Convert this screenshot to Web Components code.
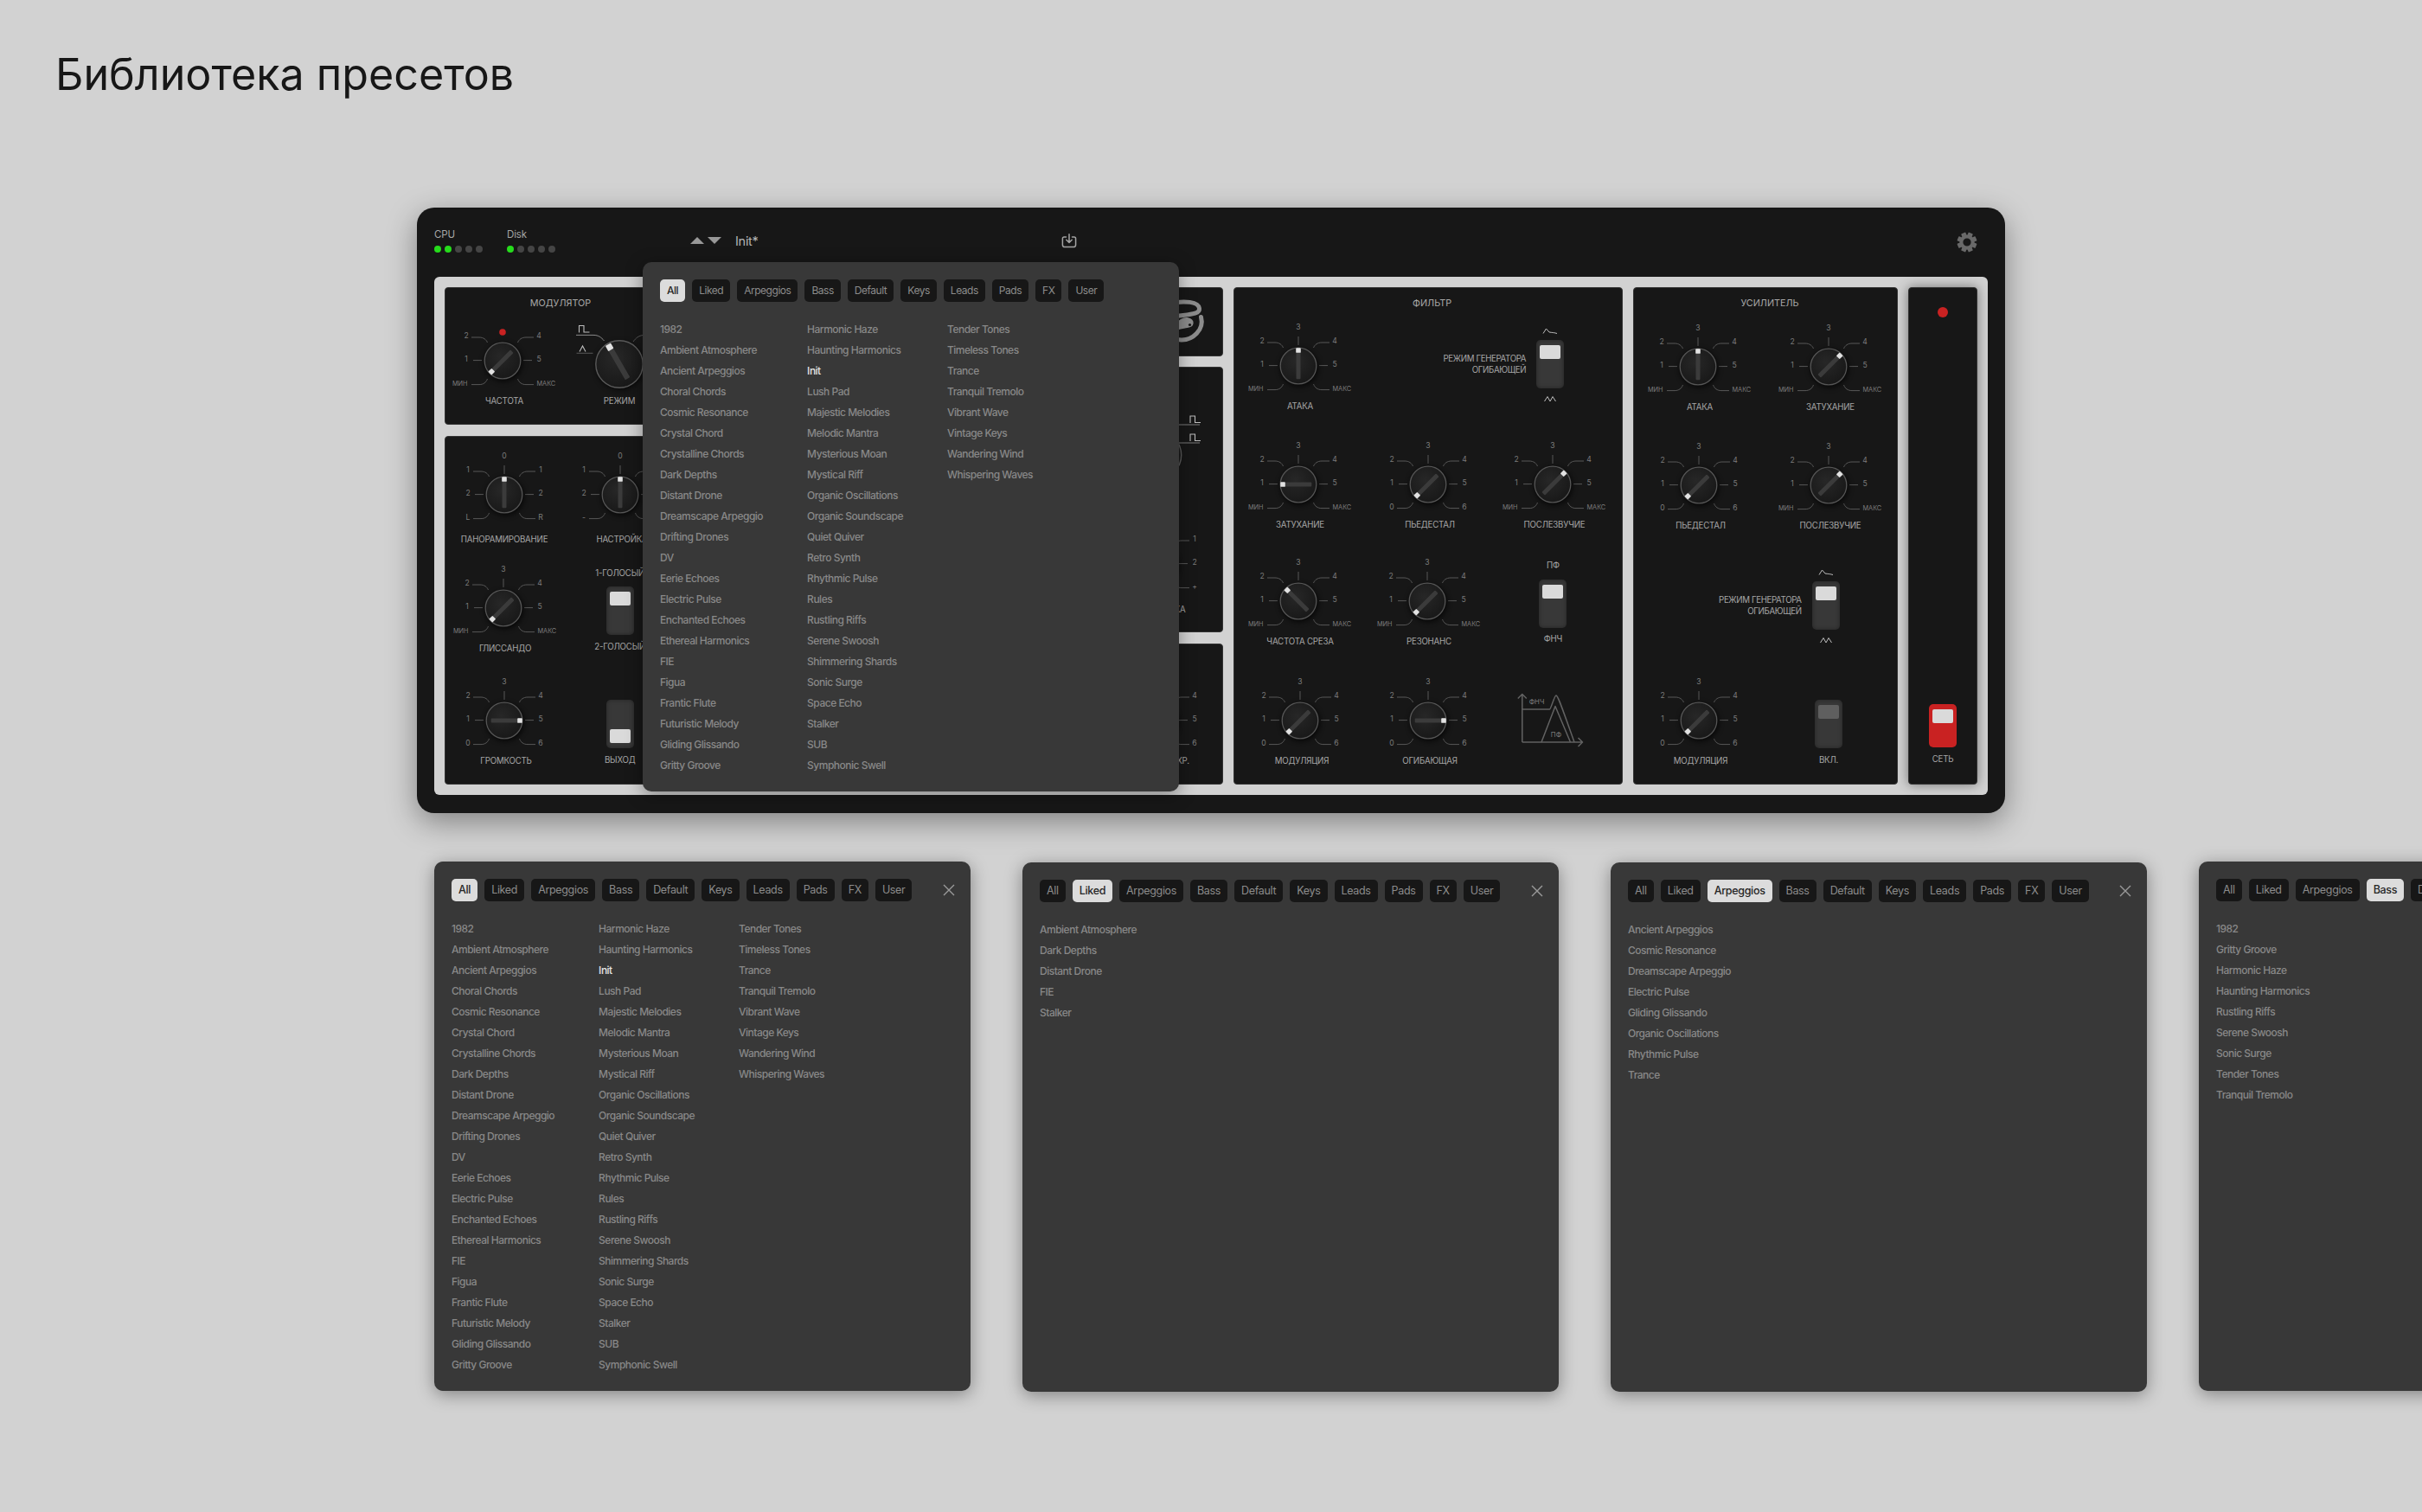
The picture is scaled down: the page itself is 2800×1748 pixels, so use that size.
<!DOCTYPE html>
<html lang="ru"><head><meta charset="utf-8"><title>Библиотека пресетов</title>
<style>
html,body{margin:0;padding:0;width:2800px;height:1748px;overflow:hidden;background:#d2d2d2;font-family:Inter,"Noto Sans",sans-serif}
h1{margin:0;padding:56px 0 0 64px;box-sizing:border-box;height:240px;font-weight:400;font-size:50.2px;line-height:60px;color:#171717}
.popups{display:flex;gap:60px;margin:56px 0 0 502px;width:2800px}
</style></head><body>
<h1>Библиотека пресетов</h1>

<synth-body>
  <synth-meter slot="top" label="CPU" on="2" style="width:84px"></synth-meter>
  <synth-meter slot="top" label="Disk" on="1" style="width:212px"></synth-meter>
  <preset-nav slot="top" name="Init*"></preset-nav>
  <gear-icon slot="top"></gear-icon>

  <left-block>
    <div slot="a" style="display:contents">
      <synth-section heading="МОДУЛЯТОР" pad="5.7" style="height:159px">
        <div style="display:flex;padding-left:1.2px;gap:4.8px">
          <synth-knob label="ЧАСТОТА" angle="-135" set="minmax" notop led></synth-knob>
          <mode-knob label="РЕЖИМ"></mode-knob>
        </div>
      </synth-section>
      <synth-section style="height:403px;margin-top:13px;padding:13.2px 0 0 3.1px">
        <knob-grid cols="133.6px 130px" rows="131.3px 129.7px 112px">
          <synth-knob label="ПАНОРАМИРОВАНИЕ" angle="0" set="pan" ly="51" lx="0"></synth-knob>
          <synth-knob label="НАСТРОЙКА" angle="0" set="tune" ly="51"></synth-knob>
          <synth-knob label="ГЛИССАНДО" angle="-135" set="minmax" style="margin-left:-1.6px"></synth-knob>
          <synth-toggle top="1-ГОЛОСЫЙ" bottom="2-ГОЛОСЫЙ" style="margin-top:6.7px"></synth-toggle>
          <synth-knob label="ГРОМКОСТЬ" angle="90" set="num"></synth-knob>
          <synth-toggle bottom="ВЫХОД" pos="bottom" style="margin-top:30.3px"></synth-toggle>
        </knob-grid>
      </synth-section>
    </div>
    <div slot="b" style="display:contents">
      <synth-section style="height:80px;align-items:flex-end"><brand-logo></brand-logo></synth-section>
      <synth-section style="height:307px;margin-top:12px;align-items:flex-end;padding-right:9.5px">
        <wave-dial></wave-dial>
        <synth-knob label="НАСТРОЙКА" angle="0" set="tune" ly="52"></synth-knob>
      </synth-section>
      <synth-section style="height:163px;margin-top:13px;align-items:flex-end;padding:33.5px 9.5px 0 0">
        <synth-knob label="СИНХР." angle="-135" set="num" lx="18"></synth-knob>
      </synth-section>
    </div>
  </left-block>

  <synth-section heading="ФИЛЬТР" pad="11.7" style="width:450px;flex:none;padding-left:9.3px">
    <knob-grid cols="149.5px 144.7px 130px" rows="137.3px 135px 138px 112px">
      <synth-knob label="АТАКА" angle="0" set="minmax"></synth-knob>
      <env-switch style="grid-column:2 / 4;margin-top:6.3px"></env-switch>
      <synth-knob label="ЗАТУХАНИЕ" angle="-90" set="minmax"></synth-knob>
      <synth-knob label="ПЬЕДЕСТАЛ" angle="-135" set="num"></synth-knob>
      <synth-knob label="ПОСЛЕЗВУЧИЕ" angle="45" set="minmax"></synth-knob>
      <synth-knob label="ЧАСТОТА СРЕЗА" angle="-45" set="minmax"></synth-knob>
      <synth-knob label="РЕЗОНАНС" angle="-135" set="minmax" style="margin-left:-1.3px"></synth-knob>
      <synth-toggle top="ПФ" bottom="ФНЧ" style="margin-top:6px"></synth-toggle>
      <synth-knob label="МОДУЛЯЦИЯ" angle="-135" set="num" style="margin-left:1.6px"></synth-knob>
      <synth-knob label="ОГИБАЮЩАЯ" angle="90" set="num"></synth-knob>
      <filter-graph></filter-graph>
    </knob-grid>
  </synth-section>

  <synth-section heading="УСИЛИТЕЛЬ" pad="12" style="width:306px;flex:none;padding-left:10px">
    <knob-grid cols="150px 130px" rows="137px 137px 135.4px 112px">
      <synth-knob label="АТАКА" angle="0" set="minmax" style="margin-left:-1px"></synth-knob>
      <synth-knob label="ЗАТУХАНИЕ" angle="45" set="minmax"></synth-knob>
      <synth-knob label="ПЬЕДЕСТАЛ" angle="-135" set="num" style="margin-left:.3px"></synth-knob>
      <synth-knob label="ПОСЛЕЗВУЧИЕ" angle="45" set="minmax"></synth-knob>
      <env-switch style="grid-column:1 / 3;margin-top:10px"></env-switch>
      <synth-knob label="МОДУЛЯЦИЯ" angle="-135" set="num" style="margin-left:.3px"></synth-knob>
      <synth-toggle bottom="ВКЛ." tone="dim" style="margin-top:30.6px"></synth-toggle>
    </knob-grid>
  </synth-section>

  <power-section></power-section>

  <preset-popup slot="overlay" tab="All" compact></preset-popup>
</synth-body>

<div class="popups">
  <preset-popup tab="All" closable></preset-popup>
  <preset-popup tab="Liked" closable style="margin-top:1px"></preset-popup>
  <preset-popup tab="Arpeggios" closable style="margin-top:1px"></preset-popup>
  <preset-popup tab="Bass" tabs="5" closable></preset-popup>
</div>

<script>
function base(name, css, render){
  customElements.define(name, class extends HTMLElement{
    connectedCallback(){
      if(this.shadowRoot) return;
      const r=this.attachShadow({mode:'open'});
      r.innerHTML='<style>'+css+'</style>'+render(this);
    }
  });
}
const FONT='font-family:Inter,"Noto Sans",sans-serif;';

base('synth-body',
 ':host{display:block;position:relative;margin-left:482px;width:1836px;height:700px;background:#171717;border-radius:20px;box-shadow:0 10px 34px rgba(0,0,0,.38);'+FONT+'}'
 +'.top{display:flex;height:80px;box-sizing:border-box;padding:24px 32px 0 20px;align-items:flex-start}'
 +'.panel{margin:0 20px;height:599px;box-sizing:border-box;background:#d2d2d2;border-radius:6px;padding:12px;display:flex;gap:12px}'
 +'.ov{position:absolute;left:261px;top:63px}',
 ()=>'<div class="top"><slot name="top"></slot></div><div class="panel"><slot></slot></div><div class="ov"><slot name="overlay"></slot></div>');

base('synth-meter',
 ':host{display:block;flex:none}.l{font-size:11.5px;line-height:14px;color:#a6a6a6;letter-spacing:-.01em}'
 +'.d{display:flex;gap:4px;margin-top:6px}i{width:8px;height:8px;border-radius:50%;background:#454545}i.on{background:#26dc1c}',
 el=>{const n=+el.getAttribute('on');let s='';for(let i=0;i<5;i++)s+='<i class="'+(i<n?'on':'')+'"></i>';
   return '<div class="l">'+el.getAttribute('label')+'</div><div class="d">'+s+'</div>';});

base('preset-nav',
 ':host{display:flex;align-items:center;flex:none;height:32px;margin-top:-2px}'
 +'.a{display:flex;gap:4px}.n{margin-left:16px;font-size:14.5px;color:#b4b4b4;width:377px;letter-spacing:-.02em}svg{display:block}',
 el=>'<div class="a"><svg width="16" height="8" viewBox="0 0 16 8"><path d="M8 0 16 8H0z" fill="#989898"/></svg>'
   +'<svg width="16" height="8" viewBox="0 0 16 8"><path d="M0 0H16L8 8z" fill="#989898"/></svg></div>'
   +'<div class="n">'+el.getAttribute('name')+'</div>'
   +'<svg width="18" height="17" viewBox="0 0 18 17" fill="none" stroke="#a4a4a4" stroke-width="1.5" stroke-linecap="round" stroke-linejoin="round"><path d="M5.5 4H3.2C2 4 1.4 4.7 1.4 5.8V13c0 1.7 1 2.6 2.6 2.6h10c1.6 0 2.6-.9 2.6-2.6V5.8c0-1.1-.6-1.8-1.8-1.8h-2.3"/><path d="M9 .8V10M5.8 7.2 9 10.4l3.2-3.2"/></svg>');

base('gear-icon',
 ':host{display:block;margin-left:auto;flex:none;height:24px;margin-top:4px}svg{display:block}',
 ()=>{let t='';for(let i=0;i<8;i++)t+='<rect x="9.2" y="0.6" width="5.6" height="5" rx=".8" transform="rotate('+(i*45+22.5)+' 12 12)"/>';
   return '<svg width="24" height="24" viewBox="0 0 24 24"><g fill="#696969">'+t+'</g><circle cx="12" cy="12" r="6.6" fill="none" stroke="#696969" stroke-width="4"/></svg>';});

base('left-block',
 ':host{display:flex;width:900px;flex:none;gap:12px}.a,.b{display:flex;flex-direction:column}.a{width:268px;flex:none}.b{flex:1;min-width:0}',
 ()=>'<div class="a"><slot name="a"></slot></div><div class="b"><slot name="b"></slot></div>');

base('synth-section',
 ':host{display:flex;flex-direction:column;box-sizing:border-box;background:#171717;border:1.5px solid #333;border-radius:4px;color:#a8a8a8;overflow:hidden}'
 +'.t{font-size:10.8px;line-height:14px;text-align:center;padding-top:10.5px;color:#a8a8a8;flex:none}',
 el=>{const h=el.getAttribute('heading');const p=el.getAttribute('pad')||0;
   return (h?'<div class="t" style="padding-bottom:'+p+'px">'+h+'</div>':'')+'<slot></slot>';});

base('knob-grid',':host{display:grid}',el=>{
  el.style.gridTemplateColumns=el.getAttribute('cols');el.style.gridTemplateRows=el.getAttribute('rows');return '<slot></slot>';});

const SETS={minmax:['МИН','1','2','3','4','5','МАКС'],num:['0','1','2','3','4','5','6'],pan:['L','2','1','0','1','2','R'],tune:['-','2','1','0','1','2','+']};
const DIALCSS='text{fill:#7c7c7c;font-size:8.6px;text-anchor:middle;dominant-baseline:central;'+FONT+'}text.m{font-size:7.3px}text.lab{fill:#a6a6a6;font-size:9.7px;letter-spacing:-.2px}svg{display:block;overflow:visible}.tk{fill:none;stroke:#585858;stroke-width:1}';
const DEFS='<defs><radialGradient id="f" cx=".42" cy=".38" r=".75"><stop offset="0" stop-color="#272727"/><stop offset="1" stop-color="#161616"/></radialGradient><filter id="b" x="-50%" y="-50%" width="200%" height="200%"><feGaussianBlur stdDeviation="3"/></filter></defs>';
function pointer(a,k){k=k||1;
  return '<g transform="rotate('+a+')"><rect x="'+(-2.5*k)+'" y="'+(-17*k)+'" width="'+(5*k)+'" height="'+(32.3*k)+'" rx="1" fill="#3b3b3b"/><rect x="'+(-2.8*k)+'" y="'+(-20.8*k)+'" width="'+(5.6*k)+'" height="'+(5.6*k)+'" rx=".9" fill="#e2e2e2"/></g>';}

base('synth-knob',':host{display:block;width:130px;height:112px}'+DIALCSS,el=>{
  const S=SETS[el.getAttribute('set')||'minmax'],a=+el.getAttribute('angle')||0,notop=el.hasAttribute('notop'),led=el.hasAttribute('led');
  const ly=+el.getAttribute('ly')||46,lx=el.hasAttribute('lx')?+el.getAttribute('lx'):2;
  const t=(s,x,y,side)=>{const long=s.length>1;
    if(long) return '<text class="m" x="'+(side<0?-40.5:39.5)+'" y="'+y+'" style="text-anchor:'+(side<0?'end':'start')+'">'+s+'</text>';
    return '<text x="'+x+'" y="'+y+'">'+s+'</text>';};
  return '<svg width="130" height="112" viewBox="-65 -54 130 112">'+DEFS
   +'<path class="tk" d="M-36-27H-27C-22-27-19-24.500-17.500-21M36-27H27C22-27 19-24.500 17.500-21M-34-.4H-24M34-.4H24M-36 27.600H-27C-22 27.600-19 25-17.500 21M36 27.600H27C22 27.600 19 25 17.500 21'+(notop?'':'M0-34V-24')+'"/>'
   +t(S[0],-42,26,-1)+t(S[1],-42,-2,-1)+t(S[2],-42,-29,-1)+(notop?'':t(S[3],0,-44.7,0))+t(S[4],42,-29,1)+t(S[5],42,-2,1)+t(S[6],42,26,1)
   +(led?'<circle cx="0" cy="-33" r="3.8" fill="#c92222"/>':'')
   +'<circle cx="1" cy="2" r="22" fill="#000" opacity=".7" filter="url(#b)"/>'
   +'<circle r="20.8" fill="url(#f)" stroke="#565656" stroke-width="1.3"/>'
   +pointer(a)
   +'<text class="lab" x="'+lx+'" y="'+ly+'">'+el.getAttribute('label')+'</text></svg>';});

const SQ=(x,y)=>'<path class="ic" d="M'+x+' '+(y+8)+'V'+y+'H'+(x+5.5)+'V'+(y+7.5)+'H'+(x+12)+'"/>';
base('mode-knob',':host{display:block;width:130px;height:112px}'+DIALCSS+'.ic{fill:none;stroke:#bdbdbd;stroke-width:1.1}',el=>
  '<svg width="130" height="112" viewBox="-65 -58 130 112">'+DEFS
  +'<path class="tk" style="stroke:#8a8a8a" d="M-50-33.600H-30C-24-33.600-21-31-17.500-27"/><path class="tk" d="M-49.500-12.700H-30.500M16-26C19-30 22-33 28-33.600"/>'
  +SQ(-46.5,-44.5)+'<path class="ic" d="M-46-14.500-42.500-21-39-14.500"/>'
  +'<circle cx="1" cy="2" r="28" fill="#000" opacity=".6" filter="url(#b)"/>'
  +'<circle r="27.2" fill="url(#f)" stroke="#5a5a5a" stroke-width="1.4"/>'
  +pointer(-30,1.26)
  +'<text class="lab" x="0" y="42">'+el.getAttribute('label')+'</text></svg>');

base('wave-dial',':host{display:block;width:103px;height:90px;margin-top:44.5px;margin-bottom:38px}'+DIALCSS+'.ic{fill:none;stroke:#bdbdbd;stroke-width:1.1}',()=>
  '<svg width="103" height="90" viewBox="1300 470 103 90">'+DEFS
  +'<path class="tk" style="stroke:#7c7c7c" d="M1340 491H1386M1345 512H1386"/>'
  +SQ(1375,481)+SQ(1375,502)
  +'<circle cx="1337.500" cy="526" r="27.200" fill="url(#f)" stroke="#5a5a5a" stroke-width="1.4"/></svg>');

base('brand-logo',':host{display:block;width:70px;height:77px}svg{display:block}',()=>
  '<svg width="70" height="77" viewBox="1342.500 333.500 70 77" fill="none" stroke="#8c8c8c" stroke-width="5" stroke-linecap="round">'
  +'<path d="M1350 351C1370 348 1385 349 1386 357C1387 364 1374 364 1360 366"/>'
  +'<path d="M1388 367C1392 382 1378 394 1365 393.500C1358 393 1352 391 1348 388"/>'
  +'<path d="M1352 382C1360 376 1365 368 1372 369C1380 371 1379 377 1372 378C1366 379 1358 381 1352 382Z" fill="#8c8c8c" stroke-width="3"/>'
  +'<circle cx="1375" cy="376" r="1.600" fill="#171717" stroke="none"/></svg>');

base('synth-toggle',
 ':host{display:flex;flex-direction:column;align-items:center;width:130px;color:#a6a6a6;font-size:9.7px;line-height:14px;letter-spacing:-.2px}'
 +'.lb{height:14px;white-space:nowrap}.tr{box-sizing:border-box;width:32px;display:flex;flex-direction:column;padding:6px 4px;border-radius:5px;background:#383838;box-shadow:inset 0 0 5px rgba(0,0,0,.35)}'
 +'.th{height:16px;border-radius:2px;background:#dadada}'
 +'.bottom{justify-content:flex-end}.dim .th{background:#5f5f5f}.red{background:#c92222;box-shadow:none}',
 el=>{const top=el.getAttribute('top'),bot=el.getAttribute('bottom'),pos=el.getAttribute('pos')||'top',tone=el.getAttribute('tone')||'',h=el.getAttribute('h')||56;
   return (top?'<div class="lb" style="margin-bottom:8.3px">'+top+'</div>':'')
   +'<div class="tr '+pos+' '+tone+'" style="height:'+h+'px"><div class="th"></div></div>'
   +(bot?'<div class="lb" style="margin-top:6.7px">'+bot+'</div>':'');});

base('env-switch',
 ':host{display:flex;align-items:center;justify-content:flex-end;gap:12px;padding-right:52.3px;align-self:start;color:#a6a6a6;font-size:9.7px;line-height:13px;text-align:right;letter-spacing:-.36px}'
 +'.c{display:flex;flex-direction:column;align-items:center;gap:4px;width:32px}svg{display:block}'
 +'.tr{box-sizing:border-box;width:32px;height:56px;padding:6px 4px;border-radius:5px;background:#383838;box-shadow:inset 0 0 5px rgba(0,0,0,.35)}.th{height:16px;border-radius:2px;background:#dadada}',
 ()=>'<div>РЕЖИМ ГЕНЕРАТОРА<br>ОГИБАЮЩЕЙ</div><div class="c">'
   +'<svg width="18" height="14" viewBox="0 0 18 14" fill="none" stroke="#bdbdbd" stroke-width="1"><path d="M1 10.500 4.500 5 8 9C11 9.500 14 9.500 17 10.500"/></svg>'
   +'<div class="tr"><div class="th"></div></div>'
   +'<svg width="18" height="14" viewBox="0 0 18 14" fill="none" stroke="#bdbdbd" stroke-width="1"><path d="M2.500 11 6 5.500 9 11 12 5.500 15.500 11"/></svg></div>');

base('filter-graph',
 ':host{display:block;width:72px;height:62px;margin:20px 0 0 29px}svg{display:block;overflow:visible}text{fill:#7c7c7c;font-size:7.8px;text-anchor:middle;dominant-baseline:central;'+FONT+'}',
 ()=>'<svg width="72" height="62" viewBox="1760 800 72 62" fill="none" stroke="#626262" stroke-width="1.5" stroke-linejoin="round">'
 +'<path d="M1760.800 859H1830M1825.500 854 1830.500 859 1825.500 864M1760.800 859V803.500M1755.800 808.500 1760.800 803.500 1765.800 808.500"/>'
 +'<path d="M1760.800 821H1792.500C1794 821 1798 805 1800 805C1802 805 1805 814 1821 859"/>'
 +'<path d="M1783 859 1799 817.500 1816.500 859"/>'
 +'<text x="1777.500" y="811.500" stroke="none">ФНЧ</text><text x="1800" y="850" stroke="none">ПФ</text></svg>');

base('power-section',
 ':host{display:flex;flex-direction:column;align-items:center;justify-content:space-between;box-sizing:border-box;width:80px;flex:none;padding:22px 0 21px;background:#171717;border:1.5px solid #333;border-radius:4px;box-shadow:0 0 14px rgba(0,0,0,.45);color:#a6a6a6}'
 +'.led{width:12px;height:12px;border-radius:50%;background:#c92222}',
 ()=>'<div class="led"></div><synth-toggle bottom="СЕТЬ" tone="red" h="50"></synth-toggle>');

const ALL=['1982','Ambient Atmosphere','Ancient Arpeggios','Choral Chords','Cosmic Resonance','Crystal Chord','Crystalline Chords','Dark Depths','Distant Drone','Dreamscape Arpeggio','Drifting Drones','DV','Eerie Echoes','Electric Pulse','Enchanted Echoes','Ethereal Harmonics','FIE','Figua','Frantic Flute','Futuristic Melody','Gliding Glissando','Gritty Groove','Harmonic Haze','Haunting Harmonics','Init','Lush Pad','Majestic Melodies','Melodic Mantra','Mysterious Moan','Mystical Riff','Organic Oscillations','Organic Soundscape','Quiet Quiver','Retro Synth','Rhythmic Pulse','Rules','Rustling Riffs','Serene Swoosh','Shimmering Shards','Sonic Surge','Space Echo','Stalker','SUB','Symphonic Swell','Tender Tones','Timeless Tones','Trance','Tranquil Tremolo','Vibrant Wave','Vintage Keys','Wandering Wind','Whispering Waves'];
const LISTS={All:ALL,
 Liked:['Ambient Atmosphere','Dark Depths','Distant Drone','FIE','Stalker'],
 Arpeggios:['Ancient Arpeggios','Cosmic Resonance','Dreamscape Arpeggio','Electric Pulse','Gliding Glissando','Organic Oscillations','Rhythmic Pulse','Trance'],
 Bass:['1982','Gritty Groove','Harmonic Haze','Haunting Harmonics','Rustling Riffs','Serene Swoosh','Sonic Surge','Tender Tones','Tranquil Tremolo']};
const TABS=['All','Liked','Arpeggios','Bass','Default','Keys','Leads','Pads','FX','User'];

base('preset-chip',
 ':host{display:block;flex:none;box-sizing:border-box;height:26px;padding:0 8px;border-radius:5px;background:#171717;color:var(--chip-c,#8c8c8c);font-size:var(--chip-f,12.5px);line-height:26px;letter-spacing:var(--chip-s,-.33px)}'
 +':host([active]){background:#dcdcdc;color:#262626;font-weight:500}',
 ()=>'<slot></slot>');

base('preset-popup',
 ':host{display:block;flex:none;box-sizing:border-box;width:620px;height:612px;padding:20px;background:#383838;border-radius:10px;box-shadow:0 4px 20px rgba(0,0,0,.38);'+FONT+'}'
 +':host([compact]){--chip-f:12px;--chip-s:-.47px}'
 +'.tabs{display:flex;gap:8px;align-items:center;height:26px}.x{margin-left:auto;margin-right:-2px;display:block}'
 +'.list{display:grid;grid-auto-flow:column;grid-template-rows:repeat(22,24px);grid-auto-columns:max-content;column-gap:51px;margin-top:20px;font-size:12px;font-weight:500;line-height:24px;color:#888;letter-spacing:-.5px}'
 +'.sel{color:#e4e4e4}',
 el=>{const tab=el.getAttribute('tab');
   const max=+el.getAttribute('tabs')||TABS.length;
   const chips=TABS.slice(0,max).map(t=>'<preset-chip'+(t===tab?' active':'')+'>'+t+'</preset-chip>').join('');
   const x=el.hasAttribute('closable')?'<svg class="x" width="14" height="14" viewBox="0 0 14 14" fill="none" stroke="#9a9a9a" stroke-width="1.4"><path d="M1 1 13 13M13 1 1 13"/></svg>':'';
   const items=LISTS[tab].map(n=>'<div'+(n==='Init'?' class="sel"':'')+'>'+n+'</div>').join('');
   return '<div class="tabs">'+chips+x+'</div><div class="list">'+items+'</div>';});
</script>
</body></html>
